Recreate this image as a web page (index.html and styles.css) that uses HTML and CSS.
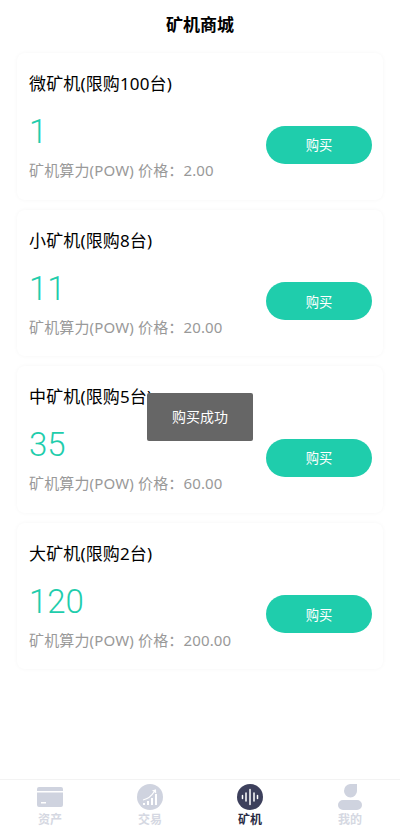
FILE: index.html
```html
<!DOCTYPE html>
<html lang="zh-CN">
<head>
     <meta charset="UTF-8">
     <meta name="viewport" content="width=device-width, initial-scale=1.0">
     <title>矿机商城</title>
     <link rel="stylesheet" href="styles.css">
</head>
<body>
     <h3 class="title">矿机商城</h3>
     <div class="list">
          <div class="card">
               <p class="name">微矿机(限购100台)</p>
               <div class="row">
                    <div>
                         <p class="power">1</p>
                         <p class="info">矿机算力(POW) 价格：2.00</p>
                    </div>
                    <button class="buy">购买</button>
               </div>
          </div>
          <div class="card">
               <p class="name">小矿机(限购8台)</p>
               <div class="row">
                    <div>
                         <p class="power">11</p>
                         <p class="info">矿机算力(POW) 价格：20.00</p>
                    </div>
                    <button class="buy">购买</button>
               </div>
          </div>
          <div class="card">
               <p class="name">中矿机(限购5台)</p>
               <div class="row">
                    <div>
                         <p class="power">35</p>
                         <p class="info">矿机算力(POW) 价格：60.00</p>
                    </div>
                    <button class="buy">购买</button>
               </div>
          </div>
          <div class="card">
               <p class="name">大矿机(限购2台)</p>
               <div class="row">
                    <div>
                         <p class="power">120</p>
                         <p class="info">矿机算力(POW) 价格：200.00</p>
                    </div>
                    <button class="buy">购买</button>
               </div>
          </div>
     </div>
     <div class="toast">购买成功</div>
     <div class="tabbar">
          <div class="tab">
               <svg width="26" height="26" viewBox="0 0 26 26"><path fill="#cfd3df" d="M0 5a2 2 0 0 1 2-2h22a2 2 0 0 1 2 2v2H0zM0 8.500h26V21a2 2 0 0 1-2 2H2a2 2 0 0 1-2-2z"/><rect x="4" y="18" width="5" height="1.500" fill="#fff"/></svg>
               <span>资产</span>
          </div>
          <div class="tab">
               <svg width="26" height="26" viewBox="0 0 26 26"><circle cx="13" cy="13" r="13" fill="#cfd3df"/><path fill="#fff" d="M6 19h2v2H6zM10 17h2v4h-2zM14 14h2v7h-2zM18 10h2v11h-2z"/><path fill="none" stroke="#fff" stroke-width="1.200" d="M6 16c4-1 8-3 11-8"/><path fill="#fff" d="M15 6.500l4-1.300 .2 4.300z"/></svg>
               <span>交易</span>
          </div>
          <div class="tab active">
               <svg width="26" height="26" viewBox="0 0 26 26"><circle cx="13" cy="13" r="13" fill="#3d405c"/><path stroke="#fff" stroke-width="1.500" stroke-linecap="round" d="M5.500 11.500v3M9 9v8M13 5.500v15M17 9v8M20.500 11.500v3"/></svg>
               <span>矿机</span>
          </div>
          <div class="tab">
               <svg width="26" height="26" viewBox="0 0 26 26"><path fill="#cfd3df" d="M13 0h7v7a6.500 6.500 0 0 1-13 0 7 7 0 0 1 6-7zM6 16h14a5 5 0 0 1 0 10H6a5 5 0 0 1 0-10z"/></svg>
               <span>我的</span>
          </div>
     </div>
</body>
</html>
```

FILE: styles.css
```css
*{
     padding:0;
     margin:0;
     box-sizing: border-box;
     font-family: "Noto Sans", "Noto Sans CJK SC", sans-serif;
}
html,body{
     width:100%;
     height:100%;
     background:#fff;
}
body{
     position: relative;
     overflow: hidden;
}
.title{
     height: 50px;
     line-height: 50px;
     text-align: center;
     font-size: 17px;
     font-weight: 700;
     color: #000;
}
.list{
     display: flex;
     flex-direction: column;
     gap: 10px;
     padding: 3px 17px 0;
}
.card{
     height: 146.5px;
     padding: 18px 11px 0 12px;
     border-radius: 8px;
     background: #fff;
     box-shadow: 0 0 4px rgba(0,0,0,.04);
}
.name{
     font-size: 17px;
     line-height: 26px;
     letter-spacing: .15px;
     color: #000;
}
.row{
     display: flex;
     justify-content: space-between;
     align-items: center;
     margin-top: 10px;
}
.power{
     font-family: Roboto, sans-serif;
     font-size: 33px;
     font-weight: 300;
     line-height: 50px;
     color: #1fcdac;
}
.info{
     margin-top: 1px;
     font-size: 15px;
     line-height: 24px;
     letter-spacing: .15px;
     color: #999;
}
.buy{
     width: 106px;
     height: 38px;
     border: none;
     border-radius: 19px;
     background: #1fcdac;
     color: #fff;
     font-size: 13.33px;
}
.toast{
     position: absolute;
     left: 147px;
     top: 393px;
     width: 106px;
     height: 48px;
     line-height: 48px;
     text-align: center;
     border-radius: 2px;
     background: #666;
     color: #fff;
     font-size: 14px;
}
.tabbar{
     position: absolute;
     left: 0;
     bottom: 0;
     width: 100%;
     height: 54px;
     display: flex;
     background: #fff;
     border-top: 1px solid #f3f3f3;
}
.tab{
     flex: 1;
     display: flex;
     flex-direction: column;
     align-items: center;
     padding-top: 4px;
     font-size: 12px;
     font-weight: 700;
     line-height: 19px;
     color: #d5d8e2;
}
.tab svg{display: block;}
.active{color: #2a2c44;}
```
